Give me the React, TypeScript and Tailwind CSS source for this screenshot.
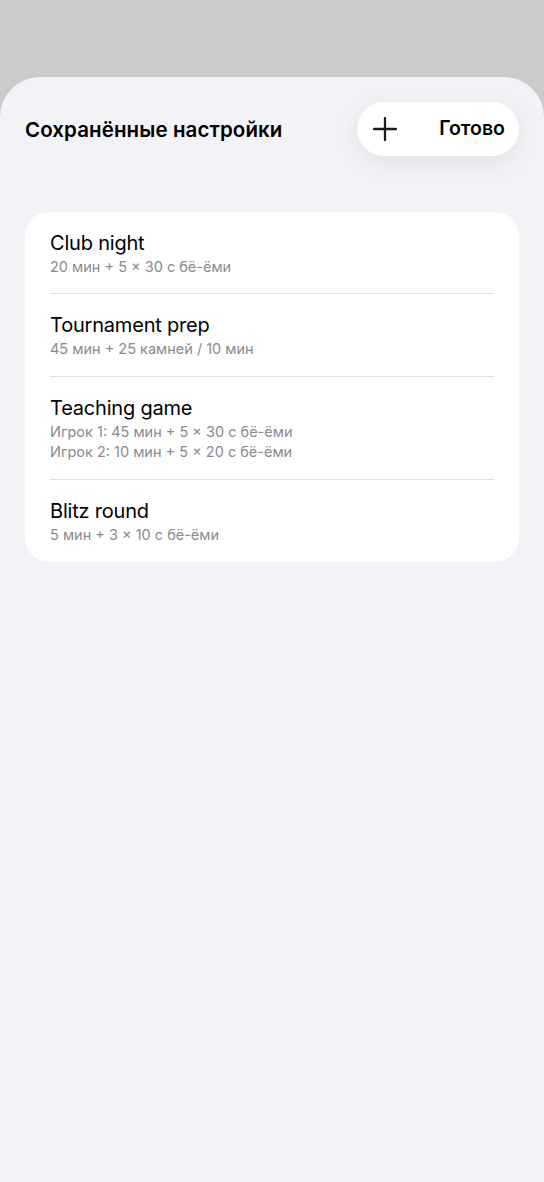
interface Preset {
  name: string;
  lines: string[];
}

const presets: Preset[] = [
  { name: 'Club night', lines: ['20 мин + 5 × 30 с бё-ёми'] },
  { name: 'Tournament prep', lines: ['45 мин + 25 камней / 10 мин'] },
  {
    name: 'Teaching game',
    lines: ['Игрок 1: 45 мин + 5 × 30 с бё-ёми', 'Игрок 2: 10 мин + 5 × 20 с бё-ёми'],
  },
  { name: 'Blitz round', lines: ['5 мин + 3 × 10 с бё-ёми'] },
];

const App = () => {
  return (
    <div
      className="min-h-[1182px] bg-[#cbcbcb] flex flex-col"
      style={{ fontFamily: 'Inter, "Noto Sans", sans-serif' }}
    >
      <div className="h-[77px] shrink-0" />

      {/* Sheet */}
      <div className="flex-1 bg-[#f2f2f7] rounded-t-[40px]">
        <header className="flex items-center justify-between px-[25px] pt-[25px]">
          <h1 className="text-[20.5px] font-semibold text-black tracking-[0.1px] translate-y-[1px]">
            Сохранённые настройки
          </h1>
          <div className="flex items-center h-[54px] w-[162px] rounded-full bg-white shadow-[0_6px_24px_rgba(0,0,0,0.08)] pl-[16px] pr-[14px]">
            <svg width="24" height="24" viewBox="0 0 24 24" className="text-[#1c1c1e]">
              <path d="M12 1v22M1 12h22" stroke="currentColor" strokeWidth="2.3" strokeLinecap="round" />
            </svg>
            <span className="ml-auto text-[19.5px] font-semibold text-black">Готово</span>
          </div>
        </header>

        <div className="mx-[25px] mt-[56px] bg-white rounded-[24px] px-[25px]">
          {presets.map((p, i) => (
            <div
              key={p.name}
              className={`pt-[19px] ${i === 0 ? 'pb-[16px]' : 'pb-[17px]'} ${
                i < presets.length - 1 ? 'border-b border-[#e0e0e4]' : ''
              }`}
            >
              <div className="text-[20px] leading-[24px] text-black tracking-[-0.2px]">{p.name}</div>
              <div className="mt-[2px]">
                {p.lines.map((l) => (
                  <div key={l} className="text-[14.5px] leading-[20px] text-[#8a8a8e]">
                    {l}
                  </div>
                ))}
              </div>
            </div>
          ))}
        </div>
      </div>
    </div>
  );
};

export default App;
